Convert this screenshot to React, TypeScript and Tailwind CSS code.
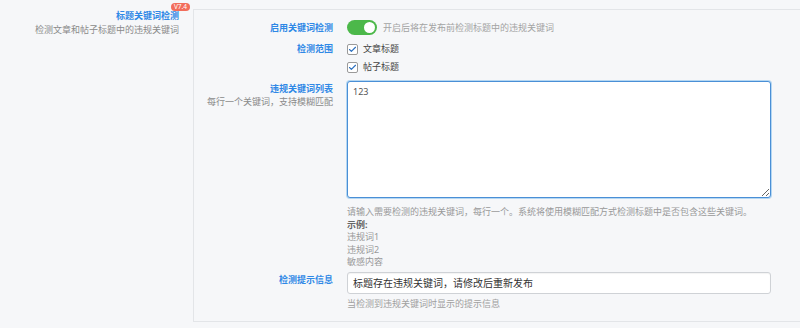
import { Check } from 'lucide-react'

const font = "font-['Noto_Sans','Noto_Sans_CJK_SC',sans-serif]"

function Label({ children, sub }: { children: React.ReactNode; sub?: string }) {
  return (
    <div className="w-[139px] shrink-0 text-right">
      <div className="text-[9px] leading-[13px] font-bold text-[#2f88e6]">{children}</div>
      {sub && <div className="text-[9px] leading-[13px] text-[#8a8a8a]">{sub}</div>}
    </div>
  )
}

function Box({ label }: { label: string }) {
  return (
    <label className="flex items-center gap-[5px]">
      <span className="w-[11px] h-[11px] rounded-[2px] border border-[#9a9a9a] bg-white flex items-center justify-center">
        <Check className="w-[9px] h-[9px] text-[#2a6fc0]" strokeWidth={3} />
      </span>
      <span className="text-[9px] leading-[12px] text-[#444]">{label}</span>
    </label>
  )
}

export default function App() {
  return (
    <div className={`w-[800px] h-[328px] overflow-hidden bg-[#f6f7f9] flex ${font}`}>
      <div className="w-[180px] shrink-0 pr-[1px] pt-[9px] text-[9px] leading-[13px]">
        <div className="flex justify-end">
          <div className="relative">
            <div className="font-bold text-[#2f88e6]">标题关键词检测</div>
            <div className="absolute -top-[6px] -right-[11px] h-[8px] bg-[#f26d5b] text-white text-[6.5px] leading-[8px] px-[3px] rounded-full">V7.4</div>
          </div>
        </div>
        <div className="text-right text-[#8a8a8a] mt-[1px]">检测文章和帖子标题中的违规关键词</div>
      </div>

      <div className="ml-[13px] mt-[9px] h-[313px] w-[640px] shrink-0 border border-[#e3e5e8] bg-[#f6f7f9] pt-[10px]">
        <div className="flex items-center">
          <Label>启用关键词检测</Label>
          <div className="ml-[14px] flex items-center">
            <span className="w-[30px] h-[15px] rounded-full bg-[#4cb84a] flex items-center justify-end px-[2px]">
              <span className="w-[11px] h-[11px] rounded-full bg-white" />
            </span>
            <span className="ml-[6px] text-[9px] leading-[12px] text-[#a3a3a3]">开启后将在发布前检测标题中的违规关键词</span>
          </div>
        </div>

        <div className="flex mt-[7px]">
          <Label>检测范围</Label>
          <div className="ml-[14px] flex flex-col gap-[6px] pt-[1px]">
            <Box label="文章标题" />
            <Box label="帖子标题" />
          </div>
        </div>

        <div className="flex mt-[8px]">
          <div className="pt-[1px]">
            <Label sub="每行一个关键词，支持模糊匹配">违规关键词列表</Label>
          </div>
          <div className="ml-[14px] w-[424px]">
            <textarea
              readOnly
              defaultValue="123"
              className="block w-full h-[117px] rounded-[3px] border border-[#4a8fd6] bg-white px-[5px] py-[3px] text-[9px] leading-[13px] text-[#555] outline-none shadow-[0_0_0_1px_rgba(102,175,233,0.45)]"
            />
            <div className="mt-[8px] text-[9px] leading-[12.5px] text-[#999]">
              <div>请输入需要检测的违规关键词，每行一个。系统将使用模糊匹配方式检测标题中是否包含这些关键词。</div>
              <div className="font-bold text-[#666]">示例:</div>
              <div>违规词1</div>
              <div>违规词2</div>
              <div>敏感内容</div>
            </div>
          </div>
        </div>

        <div className="flex mt-[3px]">
          <div className="pt-[1px]">
            <Label>检测提示信息</Label>
          </div>
          <div className="ml-[14px] w-[424px]">
            <input
              readOnly
              defaultValue="标题存在违规关键词，请修改后重新发布"
              className="block w-full h-[22px] rounded-[3px] border border-[#cfd2d6] bg-white px-[5px] text-[10px] text-[#333] outline-none shadow-[inset_0_1px_1px_rgba(0,0,0,0.05)]"
            />
            <div className="mt-[4px] text-[9px] leading-[12px] text-[#a0a0a0]">当检测到违规关键词时显示的提示信息</div>
          </div>
        </div>
      </div>
    </div>
  )
}
